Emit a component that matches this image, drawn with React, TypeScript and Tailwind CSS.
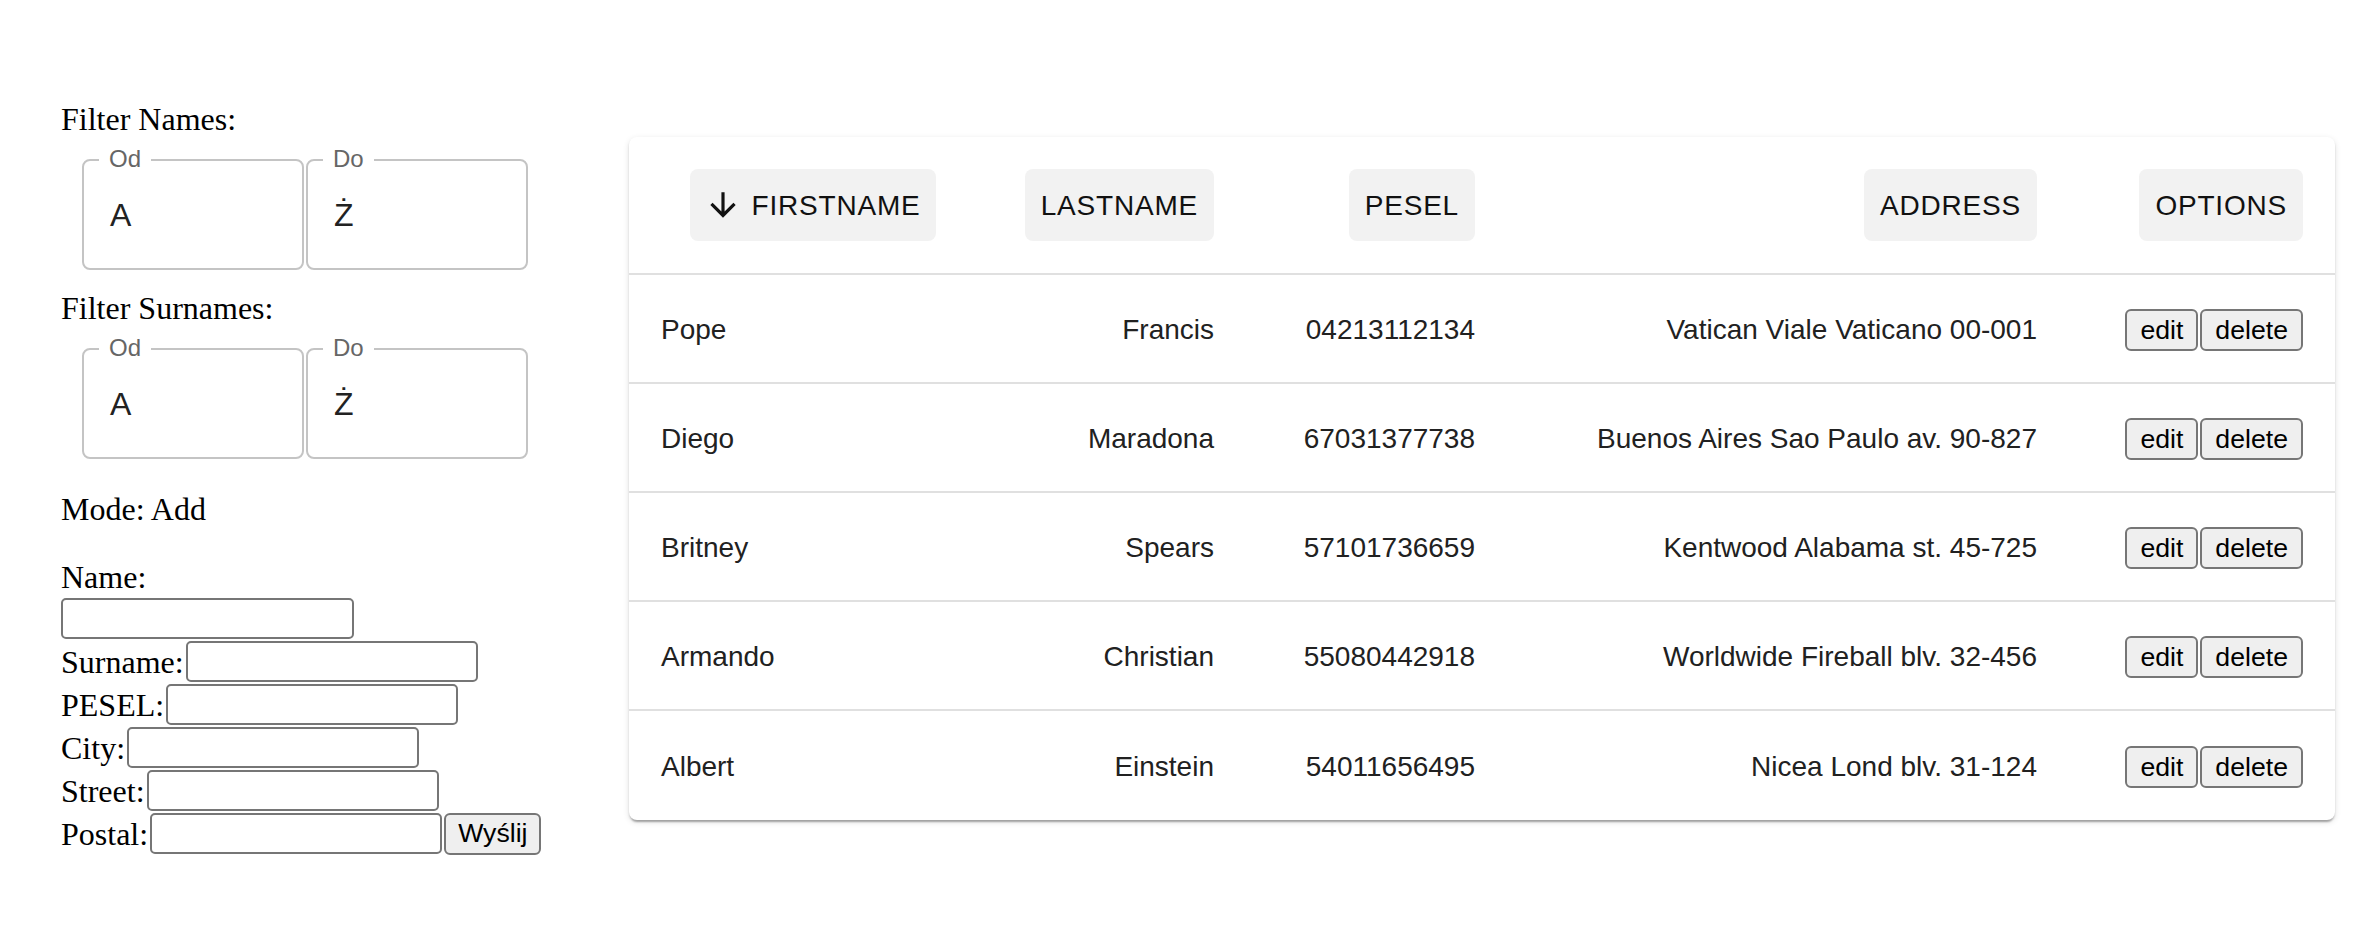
import React from "react";

const serif = { fontFamily: '"Liberation Serif", "Times New Roman", serif' };

function NotchedField({ label, value }: { label: string; value: string }) {
  return (
    <div className="relative w-[222px] h-[111px] rounded-[8px] border-2 border-[#c4c4c4] flex items-center pl-[26px] font-['Liberation_Sans',Arial,sans-serif]">
      <span className="absolute left-[15px] top-[-16px] bg-white px-[10px] text-[24px] leading-[28px] text-[#666666]">
        {label}
      </span>
      <span className="text-[32px] leading-[36px] text-[#222222]">{value}</span>
    </div>
  );
}

function FieldRow({ label, children }: { label: string; children?: React.ReactNode }) {
  return (
    <div className="flex items-center h-[41px]">
      <span className="text-[32px] leading-[36px]">{label}</span>
      <input className="ml-[2px] w-[292px] h-[41px] border-2 border-[#767676] rounded-[5px] bg-white outline-none" />
      {children}
    </div>
  );
}

const rows = [
  ["Pope", "Francis", "04213112134", "Vatican Viale Vaticano 00-001"],
  ["Diego", "Maradona", "67031377738", "Buenos Aires Sao Paulo av. 90-827"],
  ["Britney", "Spears", "57101736659", "Kentwood Alabama st. 45-725"],
  ["Armando", "Christian", "55080442918", "Worldwide Fireball blv. 32-456"],
  ["Albert", "Einstein", "54011656495", "Nicea Lond blv. 31-124"],
];

const grid = "grid grid-cols-[368px_249px_261px_562px_266px] items-center";

function HeadButton({ children }: { children: React.ReactNode }) {
  return (
    <span className="inline-flex items-center h-[72px] rounded-[8px] bg-[#f2f2f2] px-[16px] pt-[2px] text-[28px] leading-none tracking-[0.8px] text-[#111111]">
      {children}
    </span>
  );
}

function SmallButton({ children }: { children: React.ReactNode }) {
  return (
    <button className="h-[42px] px-[13px] border-2 border-[#767676] rounded-[6px] bg-[#efefef] text-[26.67px] leading-none text-black font-['Liberation_Sans',Arial,sans-serif]">
      {children}
    </button>
  );
}

export default function App() {
  return (
    <div className="min-h-[932px] w-[2377px] bg-white flex pt-[101px] pl-[61px] text-black">
      <div className="w-[568px] flex flex-col" style={serif}>
        <div className="text-[32px] leading-[36px] h-[36px]">Filter Names:</div>
        <div className="mt-[22px] ml-[21px] flex gap-[2px]">
          <NotchedField label="Od" value="A" />
          <NotchedField label="Do" value="Ż" />
        </div>
        <div className="mt-[20px] text-[32px] leading-[36px] h-[36px]">Filter Surnames:</div>
        <div className="mt-[22px] ml-[21px] flex gap-[2px]">
          <NotchedField label="Od" value="A" />
          <NotchedField label="Do" value="Ż" />
        </div>
        <div className="mt-[32px] text-[32px] leading-[36px] h-[36px]">Mode: Add</div>
        <div className="mt-[32px] text-[32px] leading-[36px] h-[36px]">Name:</div>
        <div className="mt-[3px] flex flex-col gap-[2px]">
          <div className="h-[41px]">
            <input className="w-[293px] h-[41px] border-2 border-[#767676] rounded-[5px] bg-white outline-none" />
          </div>
          <FieldRow label="Surname:" />
          <FieldRow label="PESEL:" />
          <FieldRow label="City:" />
          <FieldRow label="Street:" />
          <FieldRow label="Postal:">
            <button className="ml-[2px] h-[42px] px-[12px] border-2 border-[#767676] rounded-[6px] bg-[#efefef] text-[26.67px] leading-none text-black font-['Liberation_Sans',Arial,sans-serif]">
              Wyślij
            </button>
          </FieldRow>
        </div>
      </div>

      <div className="mt-[36px] w-[1706px] self-start rounded-[8px] bg-white shadow-[0_4px_2px_-2px_rgba(0,0,0,0.2),0_2px_2px_0_rgba(0,0,0,0.14),0_2px_6px_0_rgba(0,0,0,0.12)] font-['Liberation_Sans',Arial,sans-serif]">
        <div className={`${grid} h-[138px] border-b-2 border-[#e0e0e0]`}>
          <div className="px-[32px] flex justify-center">
            <HeadButton>
              <svg viewBox="0 0 24 24" className="w-[38px] h-[38px] mr-[10px] -ml-[2px] -mt-[2px]" fill="#111111">
                <path d="M20 12l-1.41-1.41L13 16.17V4h-2v12.17l-5.58-5.59L4 12l8 8 8-8z" />
              </svg>
              FIRSTNAME
            </HeadButton>
          </div>
          <div className="px-[32px] flex justify-end">
            <HeadButton>LASTNAME</HeadButton>
          </div>
          <div className="px-[32px] flex justify-end">
            <HeadButton>PESEL</HeadButton>
          </div>
          <div className="px-[32px] flex justify-end">
            <HeadButton>ADDRESS</HeadButton>
          </div>
          <div className="px-[32px] flex justify-end">
            <HeadButton>OPTIONS</HeadButton>
          </div>
        </div>
        {rows.map((r, i) => (
          <div
            key={i}
            className={`${grid} h-[109px] pt-[3px] text-[28px] leading-[40px] text-[#212121] ${
              i < rows.length - 1 ? "border-b-2 border-[#e0e0e0]" : ""
            }`}
          >
            <div className="px-[32px]">{r[0]}</div>
            <div className="px-[32px] text-right">{r[1]}</div>
            <div className="px-[32px] text-right">{r[2]}</div>
            <div className="px-[32px] text-right">{r[3]}</div>
            <div className="px-[32px] flex justify-end gap-[2px]">
              <SmallButton>edit</SmallButton>
              <SmallButton>delete</SmallButton>
            </div>
          </div>
        ))}
      </div>
    </div>
  );
}
